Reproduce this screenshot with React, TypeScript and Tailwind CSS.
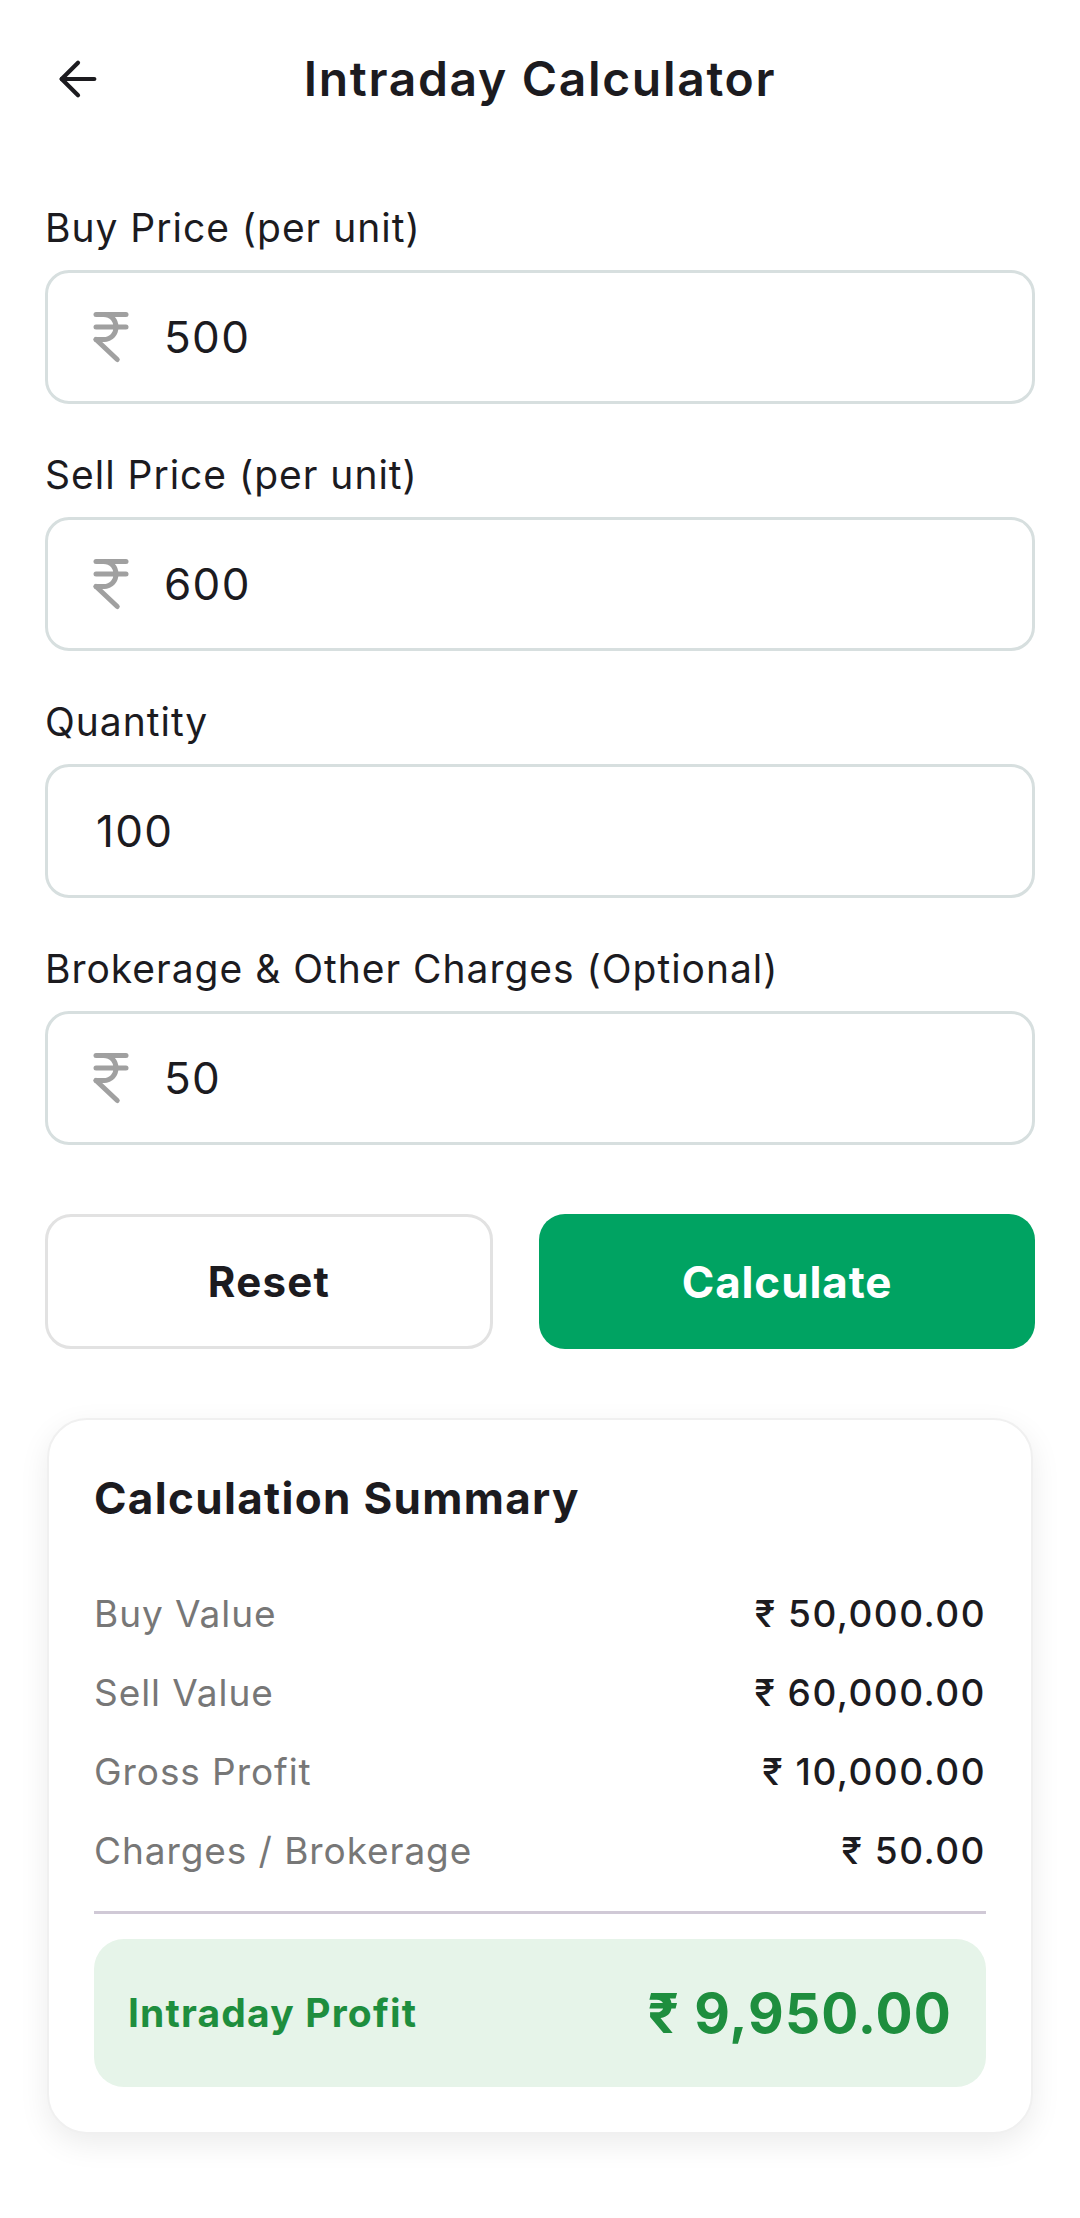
import { ArrowLeft, IndianRupee } from "lucide-react";

const font = { fontFamily: "Inter, 'Noto Sans', sans-serif" };

const Field = ({ label, value, rupee }: { label: string; value: string; rupee?: boolean }) => (
  <div className="flex flex-col">
    <label className="text-[39px] leading-[48px] tracking-[0.025em] text-[#1c1b1f]">{label}</label>
    <div
      className={
        rupee
          ? "mt-[18px] h-[134px] rounded-[24px] border-[3px] border-[#d7dfdf] flex items-center pl-[33px]"
          : "mt-[18px] h-[134px] rounded-[24px] border-[3px] border-[#d7dfdf] flex items-center pl-[48px]"
      }
    >
      {rupee && <IndianRupee size={60} strokeWidth={2} color="#a0a0a0" className="mr-[23px]" />}
      <span className="text-[44px] tracking-[0.03em] text-[#1c1b1f]">{value}</span>
    </div>
  </div>
);

const Row = ({ label, value }: { label: string; value: string }) => (
  <div className="flex justify-between items-center h-[48px]">
    <span className="text-[37px] tracking-[0.025em] text-[#777777]">{label}</span>
    <span className="text-[37px] tracking-[0.04em] font-medium text-[#1c1b1f]">{value}</span>
  </div>
);

export default function App() {
  return (
    <div className="w-[1080px] min-h-[2218px] bg-white" style={font}>
      <div className="h-[158px] grid grid-cols-[1fr_auto_1fr] items-center px-[50px]">
        <ArrowLeft size={56} strokeWidth={1.8} color="#1c1b1f" />
        <h1 className="text-[48px] tracking-[0.035em] font-semibold text-[#1c1b1f]">Intraday Calculator</h1>
        <div />
      </div>

      <div className="px-[45px] pt-[46px] flex flex-col gap-[47px]">
        <Field label="Buy Price (per unit)" value="500" rupee />
        <Field label="Sell Price (per unit)" value="600" rupee />
        <Field label="Quantity" value="100" />
        <Field label="Brokerage & Other Charges (Optional)" value="50" rupee />
      </div>

      <div className="px-[45px] mt-[69px] flex gap-[46px]">
        <button className="w-[448px] h-[135px] rounded-[26px] border-[3px] border-[#e2e2e2] text-[42px] tracking-[0.03em] font-bold text-[#1c1b1f]">
          Reset
        </button>
        <button className="flex-1 h-[135px] rounded-[26px] bg-[#00a362] text-[44px] tracking-[0.02em] font-bold text-white">
          Calculate
        </button>
      </div>

      <div className="mx-[47px] mt-[69px] rounded-[40px] border-2 border-[#f0f0f0] bg-white shadow-[0_10px_30px_rgba(0,0,0,0.08)] px-[45px] pt-[52px] pb-[45px]">
        <h2 className="text-[44px] leading-[52px] tracking-[0.03em] font-bold text-[#1c1b1f]">Calculation Summary</h2>
        <div className="mt-[66px] flex flex-col gap-[31px]">
          <Row label="Buy Value" value="₹ 50,000.00" />
          <Row label="Sell Value" value="₹ 60,000.00" />
          <Row label="Gross Profit" value="₹ 10,000.00" />
          <Row label="Charges / Brokerage" value="₹ 50.00" />
        </div>
        <div className="mt-[36px] h-[3px] bg-[#d0c9d6]" />
        <div className="mt-[25px] h-[148px] rounded-[30px] bg-[#e6f4e9] flex items-center justify-between px-[34px]">
          <span className="text-[39px] tracking-[0.03em] font-bold text-[#1e8e3e]">Intraday Profit</span>
          <span className="text-[55px] tracking-[0.02em] font-bold text-[#1e8e3e]">₹ 9,950.00</span>
        </div>
      </div>
    </div>
  );
}
